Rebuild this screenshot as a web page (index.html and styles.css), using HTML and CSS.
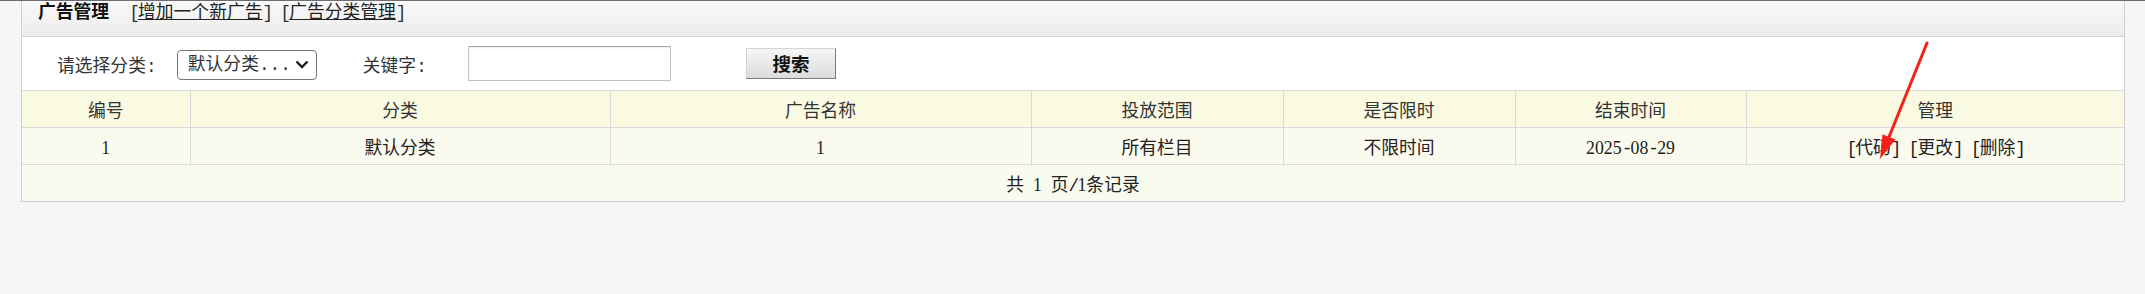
FILE: index.html
```html
<!DOCTYPE html>
<html lang="zh-CN">
<head>
<meta charset="utf-8">
<title>广告管理</title>
<link rel="stylesheet" href="styles.css">
</head>
<body>
<div class="panel">
  <div class="panel-head">
    <span class="title">广告管理</span>
    <span class="links"><span class="en">[</span><a href="#">增加一个新广告</a><span class="en">] [</span><a href="#">广告分类管理</a><span class="en">]</span></span>
  </div>
  <form class="toolbar">
    <span class="lbl lbl-cat">请选择分类<span class="en">:</span></span>
    <div class="sel-wrap">
      <select class="sel"><option>默认分类...</option></select>
      <svg class="chev" width="14" height="9" viewBox="0 0 14 9"><path d="M1.5 1.5 L7 7 L12.5 1.5" fill="none" stroke="#1a1a1a" stroke-width="2.4"/></svg>
    </div>
    <span class="lbl lbl-key">关键字<span class="en">:</span></span>
    <input class="kw" type="text">
    <button class="btn" type="button">搜索</button>
  </form>
  <table class="grid">
    <colgroup>
      <col class="c1"><col class="c2"><col class="c3"><col class="c4"><col class="c5"><col class="c6"><col class="c7">
    </colgroup>
    <thead>
      <tr class="head-row">
        <th>编号</th><th>分类</th><th>广告名称</th><th>投放范围</th><th>是否限时</th><th>结束时间</th><th>管理</th>
      </tr>
    </thead>
    <tbody>
      <tr class="data-row">
        <td><span class="num">1</span></td><td>默认分类</td><td><span class="num">1</span></td><td>所有栏目</td><td>不限时间</td><td><span class="num">2025<span class="en">-</span>08<span class="en">-</span>29</span></td>
        <td><span class="en">[</span><a href="#">代码</a><span class="en">] [</span><a href="#">更改</a><span class="en">] [</span><a href="#">删除</a><span class="en">]</span></td>
      </tr>
      <tr class="foot-row">
        <td colspan="7">共<span class="en"> </span><span class="num">1</span><span class="en"> </span>页<span class="en">/</span><span class="num">1</span>条记录</td>
      </tr>
    </tbody>
  </table>
</div>
<svg class="arrow" width="2145" height="294" viewBox="0 0 2145 294">
  <line x1="1927" y1="43" x2="1889" y2="137" stroke="#f32119" stroke-width="3" stroke-linecap="round"/>
  <polygon points="1880,159 1895.5,139.4 1882.5,134.2" fill="#f32119"/>
</svg>
</body>
</html>
```
FILE: styles.css
```css
html, body {
  margin: 0;
  padding: 0;
}
body {
  background: #f6f6f6;
  border-top: 1px solid #6e6e6e;
  font-family: "Noto Sans CJK SC", sans-serif;
  font-size: 17.8px;
  color: #333;
  position: relative;
  width: 2145px;
  height: 293px;
  overflow: hidden;
}
.en {
  font-family: "Liberation Mono", monospace;
  font-size: 17.8px;
  letter-spacing: -1.8px;
  line-height: 1;
  white-space: pre;
}
.num {
  font-family: "Liberation Serif", serif;
  font-size: 17.8px;
  line-height: 1;
}
.panel {
  margin-left: 21px;
  width: 2102px;
  border-left: 1px solid #cfcfcf;
  border-right: 1px solid #cfcfcf;
  border-bottom: 1px solid #cfcfcf;
  background: #fff;
}
.panel-head {
  height: 35px;
  border-bottom: 1px solid #d2d2d2;
  background: linear-gradient(#f9f9f9, #ececec);
  display: flex;
  align-items: flex-start;
  padding-left: 16px;
  line-height: 18px;
}
.title {
  font-weight: bold;
  color: #111;
  margin-right: 20px;
}
.links {
  color: #333;
}
.links a, .grid a {
  color: #222;
}
.grid a {
  text-decoration: none;
}
.toolbar {
  margin: 0;
  height: 53px;
  display: flex;
  align-items: center;
  padding-left: 35px;
}
.lbl {
  color: #333;
}
.sel-wrap {
  margin-left: 22px;
  position: relative;
  width: 140px;
  height: 30px;
}
.sel {
  appearance: none;
  -webkit-appearance: none;
  width: 140px;
  height: 30px;
  box-sizing: border-box;
  border: 1px solid #767676;
  border-radius: 4px;
  background: #fff;
  font-family: "Liberation Mono", "Noto Sans CJK SC", monospace;
  font-size: 17.8px;
  color: #333;
  padding: 0 24px 0 10px;
}
.chev {
  position: absolute;
  right: 8px;
  top: 11px;
  pointer-events: none;
}
.lbl-key {
  margin-left: 46px;
}
.kw {
  margin-left: 43px;
  width: 203px;
  height: 35px;
  box-sizing: border-box;
  border: 1px solid #c2c2c2;
  border-top-color: #a9a9a9;
  box-shadow: inset 0 1px 2px rgba(0,0,0,0.08);
  padding: 0 4px;
  background: #fff;
}
.btn {
  margin-left: 75px;
  width: 90px;
  height: 31px;
  box-sizing: border-box;
  border: 1px solid #d4d4d4;
  border-right-color: #7a7a7a;
  border-bottom-color: #7a7a7a;
  background: linear-gradient(#f6f6f6, #dcdcdc);
  font-family: "Noto Sans CJK SC", sans-serif;
  font-weight: bold;
  font-size: 18.5px;
  color: #111;
  padding: 0;
  line-height: 29px;
}
.grid {
  width: 100%;
  border-collapse: collapse;
  table-layout: fixed;
}
.c1 { width: 168px; }
.c2 { width: 420px; }
.c3 { width: 421px; }
.c4 { width: 252px; }
.c5 { width: 232px; }
.c6 { width: 231px; }
.c7 { width: 378px; }
.grid th, .grid td {
  border: 1px solid #d9d9d9;
  height: 36px;
  padding: 0;
  line-height: 36px;
  text-align: center;
  font-weight: normal;
  color: #333;
}
.grid th:first-child, .grid td:first-child {
  border-left: none;
}
.grid th:last-child, .grid td:last-child {
  border-right: none;
}
.head-row th {
  background: #fafae3;
}
.data-row td {
  background: #fafaee;
  color: #222;
}
.foot-row td {
  background: #f9fbee;
  border-bottom: none;
  color: #222;
}
.arrow {
  position: absolute;
  left: 0;
  top: -1px;
  pointer-events: none;
}
```
